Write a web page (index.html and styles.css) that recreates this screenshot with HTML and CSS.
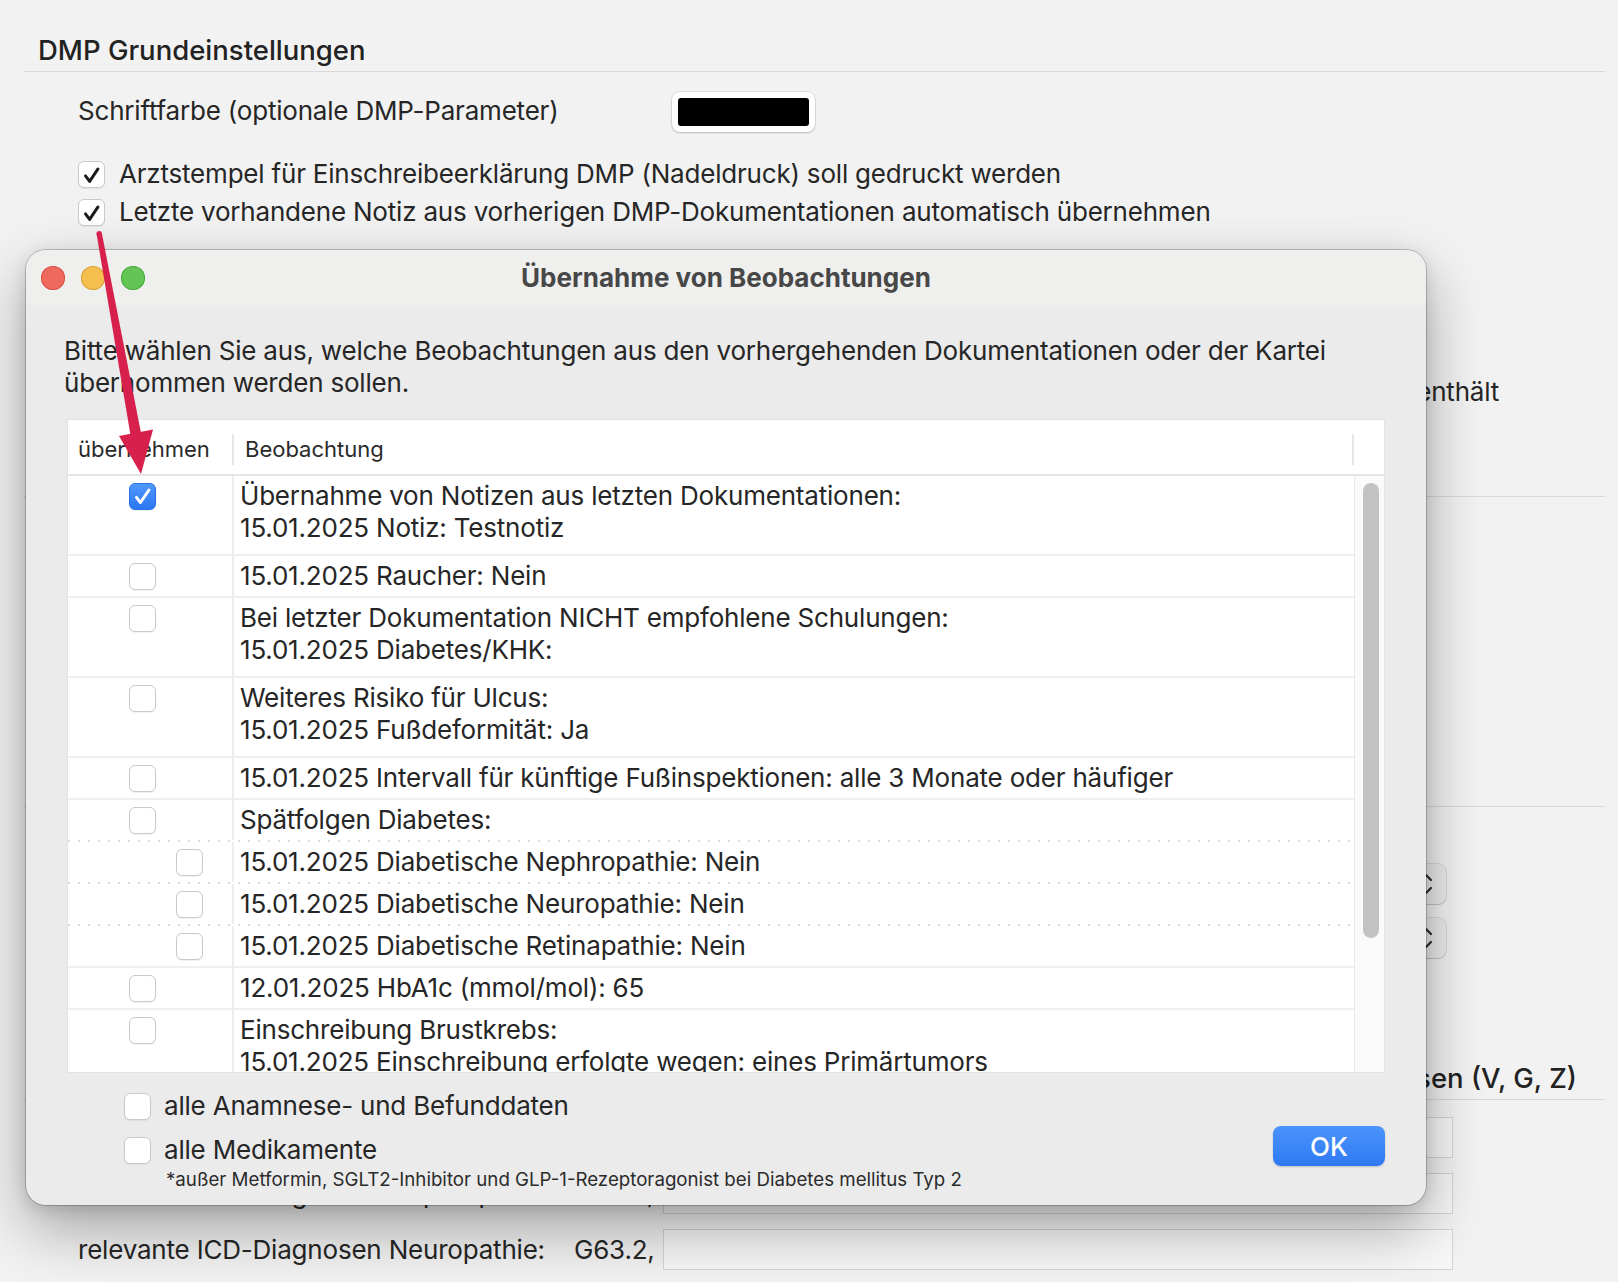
FILE: index.html
```html
<!DOCTYPE html>
<html lang="de">
<head>
<meta charset="utf-8">
<title>DMP Grundeinstellungen</title>
<link rel="stylesheet" href="styles.css">
</head>
<body>
<main class="page">
  <section class="sec">
    <h2 class="sec-title">DMP Grundeinstellungen</h2>
    <div class="sec-body">
      <div class="color-row">
        <span class="color-label">Schriftfarbe (optionale DMP-Parameter)</span>
        <span class="swatch"><span class="swatch-fill"></span></span>
      </div>
      <div class="check-row first">
        <span class="cb"><svg viewBox="0 0 27 27" width="27" height="27"><path d="M7 15 L11.5 21 L20.5 7.5" class="chk-dark"/></svg></span>
        <span>Arztstempel für Einschreibeerklärung DMP (Nadeldruck) soll gedruckt werden</span>
      </div>
      <div class="check-row">
        <span class="cb"><svg viewBox="0 0 27 27" width="27" height="27"><path d="M7 15 L11.5 21 L20.5 7.5" class="chk-dark"/></svg></span>
        <span>Letzte vorhandene Notiz aus vorherigen DMP-Dokumentationen automatisch übernehmen</span>
      </div>
      <div class="check-row tail">
        <span>Notiz enthält</span>
      </div>
    </div>
  </section>

  <section class="sec sec-2">
    <h2 class="sec-title">&nbsp;</h2>
  </section>

  <section class="sec sec-3">
    <h2 class="sec-title">&nbsp;</h2>
    <div class="sec-body">
      <div class="popup-row first">
        <span></span>
        <span class="popup"><svg class="chev" viewBox="0 0 14 26" width="14" height="26"><path d="M2 9 L7 4 L12 9 M2 17 L7 22 L12 17"/></svg></span>
      </div>
      <div class="popup-row">
        <span></span>
        <span class="popup"><svg class="chev" viewBox="0 0 14 26" width="14" height="26"><path d="M2 9 L7 4 L12 9 M2 17 L7 22 L12 17"/></svg></span>
      </div>
    </div>
  </section>

  <section class="sec sec-4">
    <h2 class="sec-title right">ICD-Diagnosen (V, G, Z)</h2>
    <div class="sec-body">
      <div class="field-row first">
        <span></span>
        <span></span>
        <span class="field"></span>
      </div>
      <div class="field-row">
        <span>relevante ICD-Diagnosen Nephropathie:</span>
        <span>N08.3,</span>
        <span class="field"></span>
      </div>
      <div class="field-row">
        <span>relevante ICD-Diagnosen Neuropathie:</span>
        <span>G63.2,</span>
        <span class="field"></span>
      </div>
    </div>
  </section>
</main>

<div class="dialog">
  <div class="titlebar">
    <div class="lights">
      <span class="light red"></span>
      <span class="light yellow"></span>
      <span class="light green"></span>
    </div>
    <div class="title">Übernahme von Beobachtungen</div>
    <div></div>
  </div>
  <div class="dialog-body">
    <p class="desc">Bitte wählen Sie aus, welche Beobachtungen aus den vorhergehenden Dokumentationen oder der Kartei<br>übernommen werden sollen.</p>
    <div class="table">
      <div class="thead">
        <div class="th th-1">übernehmen</div>
        <div class="th th-2">Beobachtung</div>
        <div class="th th-3"></div>
      </div>
      <div class="tbody">
        <div class="rows">
          <div class="row multi">
            <div class="c1"><span class="cb blue"><svg viewBox="0 0 27 27" width="27" height="27"><path d="M7 14.5 L11.3 20 L20.5 6.5" class="chk-white"/></svg></span></div>
            <div class="c2">Übernahme von Notizen aus letzten Dokumentationen:<br>15.01.2025 Notiz: Testnotiz</div>
          </div>
          <div class="row">
            <div class="c1"><span class="cb"></span></div>
            <div class="c2">15.01.2025 Raucher: Nein</div>
          </div>
          <div class="row multi">
            <div class="c1"><span class="cb"></span></div>
            <div class="c2">Bei letzter Dokumentation NICHT empfohlene Schulungen:<br>15.01.2025 Diabetes/KHK:</div>
          </div>
          <div class="row multi">
            <div class="c1"><span class="cb"></span></div>
            <div class="c2">Weiteres Risiko für Ulcus:<br>15.01.2025 Fußdeformität: Ja</div>
          </div>
          <div class="row">
            <div class="c1"><span class="cb"></span></div>
            <div class="c2">15.01.2025 Intervall für künftige Fußinspektionen: alle 3 Monate oder häufiger</div>
          </div>
          <div class="row dotted">
            <div class="c1"><span class="cb"></span></div>
            <div class="c2">Spätfolgen Diabetes:</div>
          </div>
          <div class="row dotted">
            <div class="c1 nested"><span class="cb"></span></div>
            <div class="c2">15.01.2025 Diabetische Nephropathie: Nein</div>
          </div>
          <div class="row dotted">
            <div class="c1 nested"><span class="cb"></span></div>
            <div class="c2">15.01.2025 Diabetische Neuropathie: Nein</div>
          </div>
          <div class="row">
            <div class="c1 nested"><span class="cb"></span></div>
            <div class="c2">15.01.2025 Diabetische Retinapathie: Nein</div>
          </div>
          <div class="row">
            <div class="c1"><span class="cb"></span></div>
            <div class="c2">12.01.2025 HbA1c (mmol/mol): 65</div>
          </div>
          <div class="row multi">
            <div class="c1"><span class="cb"></span></div>
            <div class="c2">Einschreibung Brustkrebs:<br>15.01.2025 Einschreibung erfolgte wegen: eines Primärtumors</div>
          </div>
        </div>
        <div class="track"><div class="thumb"></div></div>
      </div>
    </div>
    <div class="footer">
      <div class="options">
        <div class="opt first"><span class="cb"></span><span>alle Anamnese- und Befunddaten</span></div>
        <div class="opt"><span class="cb"></span><span>alle Medikamente</span></div>
        <div class="footnote">*außer Metformin, SGLT2-Inhibitor und GLP-1-Rezeptoragonist bei Diabetes mellitus Typ 2</div>
      </div>
      <button class="ok">OK</button>
    </div>
  </div>
</div>

<svg class="arrow" viewBox="0 0 1618 1282" width="1618" height="1282">
  <circle cx="99.2" cy="233.6" r="2.7"/>
  <polygon points="96.5,233.6 101.9,233.6 142,438 131,438"/>
  <polygon points="119,436 153,429.5 141,474"/>
</svg>
</body>
</html>
```

FILE: styles.css
```css
* { box-sizing: border-box; }
html, body { margin: 0; padding: 0; }
body {
  width: 1618px;
  height: 1282px;
  overflow: hidden;
  position: relative;
  background: #f2f2f2;
  font-family: "Inter", "Noto Sans", sans-serif;
  font-size: 26px;
  letter-spacing: -0.2px;
  color: #262626;
}

/* ---------- background page ---------- */
.page { padding: 34px 13px 0 24px; }
.sec-title {
  margin: 0;
  padding: 0 0 5px 14px;
  height: 38px;
  font-size: 27.5px;
  font-weight: 500;
  line-height: 32px;
  letter-spacing: 0;
  border-bottom: 1px solid #d9d9d9;
  color: #222;
}
.sec-title.right { text-align: right; padding-right: 28px; }
.sec-body { padding-left: 54px; }

.color-row { display: flex; align-items: center; height: 40px; margin-top: 20px; }
.color-label { width: 594px; flex: none; margin-top: -3px; }
.swatch {
  width: 143px; height: 40px; padding: 6px;
  background: #fff; border-radius: 8px;
  box-shadow: 0 0 0 1px rgba(0,0,0,0.07), 0 1px 2px rgba(0,0,0,0.18);
}
.swatch-fill { display: block; height: 100%; background: #000; border-radius: 3px; }

.check-row { display: flex; align-items: center; gap: 14px; height: 38px; line-height: 32px; }
.check-row.first { margin-top: 23px; }
.check-row.tail { margin-top: 142px; justify-content: flex-end; padding-right: 106px; }

.sec-2 { margin-top: 48px; }
.sec-3 { margin-top: 272px; }
.popup-row { display: grid; grid-template-columns: 585px 783px; align-items: center; height: 40px; }
.popup-row.first { margin-top: 57px; }
.popup-row + .popup-row { margin-top: 14px; }
.popup {
  height: 40px; display: flex; align-items: center; justify-content: flex-end;
  padding-right: 13px;
  background: #ededed; border-radius: 8px;
  box-shadow: 0 0 0 1px rgba(0,0,0,0.1), 0 1px 1px rgba(0,0,0,0.12);
}
.chev path { fill: none; stroke: #2a2a2a; stroke-width: 2.2; stroke-linecap: round; stroke-linejoin: round; }

.sec-4 { margin-top: 104px; }
.field-row { display: grid; grid-template-columns: 496px 89px 790px; align-items: center; height: 41px; }
.field-row.first { margin-top: 17px; }
.field-row + .field-row { margin-top: 15px; }
.field { height: 41px; background: #f7f7f7; border: 1px solid #d3d3d3; }

/* ---------- checkboxes ---------- */
.cb {
  width: 27px; height: 27px; flex: none;
  display: inline-flex; align-items: center; justify-content: center;
  background: #fff; border: 1px solid #c9c9c9; border-radius: 6px;
  box-shadow: 0 1px 1px rgba(0,0,0,0.06);
}
.cb svg { display: block; }
.chk-dark { fill: none; stroke: #1b1b1b; stroke-width: 3.2; stroke-linecap: round; stroke-linejoin: round; }
.cb.blue { background: linear-gradient(#4f98fc, #2b76f2); border-color: #2a70e4; }
.chk-white { fill: none; stroke: #fff; stroke-width: 3.2; stroke-linecap: round; stroke-linejoin: round; }

/* ---------- dialog ---------- */
.dialog {
  position: absolute; left: 26px; top: 250px;
  width: 1400px; height: 955px;
  border-radius: 20px;
  background: #ebebeb;
  overflow: hidden;
  display: flex; flex-direction: column;
  box-shadow: 0 0 0 1px rgba(0,0,0,0.2), 0 24px 60px rgba(0,0,0,0.33), 0 4px 16px rgba(0,0,0,0.12);
}
.titlebar {
  height: 55px; flex: none;
  display: grid; grid-template-columns: 1fr auto 1fr; align-items: center;
  padding: 0 15px;
  background: #efefee;
}
.lights { display: flex; gap: 16px; }
.light { width: 24px; height: 24px; border-radius: 50%; }
.light.red { background: #ee6a5e; box-shadow: inset 0 0 0 1px #d85346; }
.light.yellow { background: #f5bf4f; box-shadow: inset 0 0 0 1px #d9a23e; }
.light.green { background: #62c554; box-shadow: inset 0 0 0 1px #4fab42; }
.title { font-weight: 700; font-size: 26px; letter-spacing: 0; color: #474747; }

.dialog-body { flex: 1; padding: 30px 41px 0 41px; display: flex; flex-direction: column; }
.desc { margin: 0 0 20px -3px; line-height: 32px; white-space: nowrap; }

.table {
  width: 1318px; height: 654px; flex: none;
  background: #fff; border: 1px solid #e2e2e2;
  display: flex; flex-direction: column;
}
.thead {
  height: 56px; flex: none;
  display: grid; grid-template-columns: 166px 1120px 30px; align-items: center;
  padding-top: 4px;
  border-bottom: 2px solid #e5e5e5;
  font-size: 22px; letter-spacing: 0; color: #2a2a2a;
}
.th { height: 31px; line-height: 31px; }
.th-1 { padding-left: 10px; border-right: 2px solid #e6e6e6; }
.th-2 { padding-left: 11px; border-right: 2px solid #e6e6e6; }

.tbody { flex: 1; display: flex; overflow: hidden; }
.rows { flex: 1; overflow: hidden; }
.row { display: grid; grid-template-columns: 166px 1fr; border-bottom: 2px solid #efefef; line-height: 32px; }
.row.dotted {
  border-bottom: 2px solid transparent;
  background: linear-gradient(90deg, #dddddd 0 2px, transparent 2px) left bottom / 10px 2px repeat-x;
  background-origin: border-box;
  background-clip: border-box;
}
.c1 { padding: 7px 0 0 61px; border-right: 2px solid #ededed; }
.c1.nested { padding-left: 108px; }
.c1 .cb { vertical-align: top; }
.c2 { padding: 4px 0 4px 6px; white-space: nowrap; }
.row.multi .c2 { padding-bottom: 10px; }

.track { width: 30px; flex: none; background: #fafafa; border-left: 1px solid #e8e8e8; padding: 7px 0 0 8px; }
.thumb { width: 16px; height: 455px; border-radius: 8px; background: #c2c2c2; }

.footer { display: flex; align-items: flex-start; }
.options { flex: 1; padding-left: 57px; }
.opt { display: flex; align-items: center; gap: 13px; height: 32px; line-height: 32px; }
.opt.first { margin-top: 17px; }
.opt + .opt { margin-top: 12px; }
.footnote { margin-top: 3px; padding-left: 42px; font-size: 18.7px; letter-spacing: 0; line-height: 22px; color: #2b2b2b; }
.ok {
  margin-top: 53px;
  width: 112px; height: 40px;
  border: none; border-radius: 8px;
  background: linear-gradient(#4b94fb, #2e79f4);
  color: #fff; font-family: inherit; font-size: 26px; font-weight: 500; letter-spacing: 0;
  box-shadow: 0 1px 2px rgba(0,0,0,0.18);
  padding: 0;
}

/* ---------- annotation arrow ---------- */
.arrow { position: absolute; left: 0; top: 0; pointer-events: none; fill: #d7214c; }
```
